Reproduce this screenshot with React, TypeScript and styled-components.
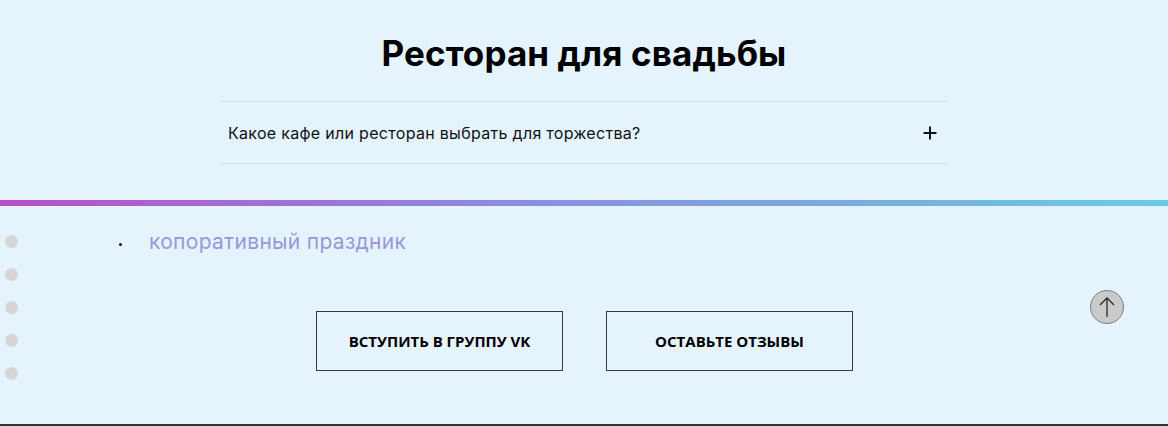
import React from "react";
import styled, { createGlobalStyle } from "styled-components";

const Global = createGlobalStyle`
  html, body { margin: 0; padding: 0; }
  body {
    background: #e5f3fd;
    font-family: "Inter", "Noto Sans", sans-serif;
    color: #000;
  }
`;

const Page = styled.div`
  position: relative;
  width: 1168px;
  height: 426px;
  background: #e5f3fd;
  overflow: hidden;
  display: flex;
  flex-direction: column;
`;

const Top = styled.section`
  display: flex;
  flex-direction: column;
  align-items: center;
  padding-top: 32px;
  height: 200px;
  box-sizing: border-box;
`;

const Title = styled.h2`
  margin: 0;
  font-family: "Inter", "Noto Sans", sans-serif;
  font-weight: 700;
  font-size: 35px;
  line-height: 42px;
  letter-spacing: 0.1px;
  color: #000;
`;

const Accordion = styled.div`
  margin-top: 27px;
  width: 728px;
  border-top: 1px solid #d3dfe8;
  border-bottom: 1px solid #d3dfe8;
`;

const Question = styled.div`
  height: 61px;
  display: flex;
  align-items: center;
  justify-content: space-between;
  padding: 0 11px 0 8px;
  font-family: "Inter", "Noto Sans", sans-serif;
  font-size: 16px;
  font-weight: 400;
  letter-spacing: 0.3px;
  color: #111;
`;

const Plus = styled.svg`
  width: 14px;
  height: 14px;
  display: block;
`;

const GradientBar = styled.div`
  height: 6px;
  background: linear-gradient(90deg, #b84ecb 0%, #8c8ede 45%, #78aee0 75%, #69cbe6 100%);
`;

const Bottom = styled.section`
  flex: 1;
  display: flex;
  flex-direction: column;
  border-bottom: 2px solid #333;
`;

const List = styled.ul`
  margin: 22px 0 0 0;
  padding: 0 0 0 149px;
  list-style: none;
`;

const ListItem = styled.li`
  position: relative;
  font-family: "Inter", "Noto Sans", sans-serif;
  font-size: 21px;
  line-height: 28px;
  letter-spacing: 0.3px;
  color: #9a97d8;
  &::before {
    content: "";
    position: absolute;
    left: -30px;
    top: 15px;
    width: 3px;
    height: 3px;
    border-radius: 50%;
    background: #111;
  }
`;

const Buttons = styled.div`
  margin-top: 55px;
  display: flex;
  justify-content: center;
  gap: 43px;
  padding-left: 1px;
`;

const OutlineButton = styled.button`
  width: 247px;
  height: 60px;
  box-sizing: border-box;
  background: transparent;
  border: 1px solid #3a3a3a;
  font-family: "Open Sans", "Noto Sans", sans-serif;
  font-weight: 700;
  font-size: 15px;
  color: #000;
  cursor: pointer;
`;

const Dots = styled.nav`
  position: absolute;
  left: 5px;
  top: 235px;
  display: flex;
  flex-direction: column;
  gap: 20px;
`;

const Dot = styled.span`
  width: 13px;
  height: 13px;
  border-radius: 50%;
  background: #d6d6d6;
`;

const ScrollTop = styled.button`
  position: absolute;
  left: 1090px;
  top: 290px;
  width: 34px;
  height: 34px;
  padding: 0;
  border-radius: 50%;
  border: 1px solid #7d7d7d;
  background: #cacaca;
  display: flex;
  align-items: center;
  justify-content: center;
`;

export default function App() {
  return (
    <>
      <Global />
      <Page>
        <Top>
          <Title>Ресторан для свадьбы</Title>
          <Accordion>
            <Question>
              <span>Какое кафе или ресторан выбрать для торжества?</span>
              <Plus viewBox="0 0 14 14">
                <path d="M7 0.5V13.5M0.5 7H13.5" stroke="#111" strokeWidth="2" />
              </Plus>
            </Question>
          </Accordion>
        </Top>
        <GradientBar />
        <Bottom>
          <List>
            <ListItem>копоративный праздник</ListItem>
          </List>
          <Buttons>
            <OutlineButton>ВСТУПИТЬ В ГРУППУ VK</OutlineButton>
            <OutlineButton>ОСТАВЬТЕ ОТЗЫВЫ</OutlineButton>
          </Buttons>
        </Bottom>
        <Dots>
          <Dot />
          <Dot />
          <Dot />
          <Dot />
          <Dot />
        </Dots>
        <ScrollTop aria-label="Наверх">
          <svg width="20" height="22" viewBox="0 0 20 22">
            <path d="M10 21V2M3 9L10 2L17 9" stroke="#2a2a2a" strokeWidth="1.3" fill="none" />
          </svg>
        </ScrollTop>
      </Page>
    </>
  );
}
